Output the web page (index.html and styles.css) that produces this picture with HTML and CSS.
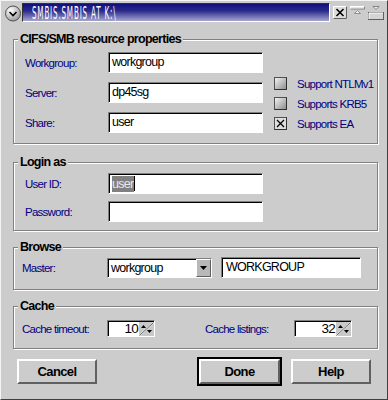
FILE: index.html
```html
<!DOCTYPE html>
<html lang="en">
<head>
    <meta charset="UTF-8">
    <meta name="viewport" content="width=device-width, initial-scale=1.0">
    <link rel="stylesheet" href="styles.css">
    <title>SMBIS.SMBIS AT K:\</title>
</head>
<body>
    <div class="window">
        <div class="titlebar">
            <svg class="sysmenu" width="18" height="18" viewBox="0 0 18 18">
                <defs>
                    <radialGradient id="knob" cx="35%" cy="30%" r="75%">
                        <stop offset="0" stop-color="#ffffff"/>
                        <stop offset="1" stop-color="#9a9a9a"/>
                    </radialGradient>
                </defs>
                <circle cx="9" cy="9.5" r="7.5" fill="url(#knob)" stroke="#505050" stroke-width="1"/>
                <path d="M5.5 8 L9 11.5 L12.5 8" fill="none" stroke="#000" stroke-width="1.6"/>
            </svg>
            <div class="caption"><span class="caption-text">SMBIS.SMBIS AT K:\</span></div>
            <svg class="tb-btn" width="14" height="13" viewBox="0 0 14 13">
                <rect x="0.5" y="0.5" width="13" height="12" fill="#dcdcdc" stroke="#fff"/>
                <path d="M13.5 0.5 V12.5 H0.5" fill="none" stroke="#606060"/>
                <path d="M3.5 3 L10.5 10 M10.5 3 L3.5 10" stroke="#000" stroke-width="1.6"/>
            </svg>
            <svg class="tb-btn" width="15" height="13" viewBox="0 0 15 13">
                <rect x="0.5" y="0.5" width="14" height="2" fill="#e8e8e8" stroke="#fff"/>
                <path d="M14.5 0.5 V3 H0.5" fill="none" stroke="#808080"/>
                <path d="M4.5 7.5 L7.5 4.5 L10.5 7.5 Z" fill="#f4f4f4" stroke="#909090"/>
            </svg>
            <svg class="tb-btn" width="16" height="14" viewBox="0 0 16 14">
                <path d="M5 0.5 H11 L8 3.5 Z" fill="#f4f4f4" stroke="#808080"/>
                <rect x="0.5" y="6.5" width="15" height="7" fill="#d4d4d4" stroke="#606060"/>
                <path d="M1 13 V7 H15" fill="none" stroke="#fff"/>
            </svg>
        </div>

        <div class="content">
            <fieldset class="group group-resource">
                <legend>CIFS/SMB resource properties</legend>
                <div class="group-body resource-body">
                    <div class="form-grid">
                        <span class="label">Workgroup:</span>
                        <div class="field">workgroup</div>
                        <span class="label">Server:</span>
                        <div class="field">dp45sg</div>
                        <span class="label">Share:</span>
                        <div class="field">user</div>
                    </div>
                    <div class="checks">
                        <div class="check"><span class="box"></span>Support NTLMv1</div>
                        <div class="check"><span class="box"></span>Supports KRB5</div>
                        <div class="check">
                            <span class="box checked">
                                <svg width="11" height="11" viewBox="0 0 11 11"><path d="M2 2 L9 9 M9 2 L2 9" stroke="#000" stroke-width="1.3"/></svg>
                            </span>Supports EA
                        </div>
                    </div>
                </div>
            </fieldset>

            <fieldset class="group group-login">
                <legend>Login as</legend>
                <div class="group-body login-body">
                    <div class="form-grid login-grid">
                        <span class="label">User ID:</span>
                        <div class="field"><span class="selected">user</span><span class="caret"></span></div>
                        <span class="label">Password:</span>
                        <div class="field"></div>
                    </div>
                </div>
            </fieldset>

            <fieldset class="group group-browse">
                <legend>Browse</legend>
                <div class="group-body browse-body">
                    <span class="label label-master">Master:</span>
                    <div class="combo">
                        <span class="combo-text">workgroup</span>
                        <span class="combo-btn">
                            <svg width="7" height="4" viewBox="0 0 7 4"><path d="M0 0 H7 L3.5 4 Z" fill="#000"/></svg>
                        </span>
                    </div>
                    <div class="field field-master">WORKGROUP</div>
                </div>
            </fieldset>

            <fieldset class="group group-cache">
                <legend>Cache</legend>
                <div class="group-body cache-body">
                    <span class="label label-timeout">Cache timeout:</span>
                    <div class="spin spin-timeout">
                        <span class="spin-value">10</span>
                        <svg class="spin-btn" width="15" height="14" viewBox="0 0 15 14">
                            <rect width="15" height="14" fill="#c8c8c8"/>
                            <path d="M0 14 L15 0" stroke="#fff" stroke-width="1.5"/>
                            <path d="M0.5 13.5 L14.5 0.5" stroke="#303030" stroke-width="0.8"/>
                            <path d="M2 6 L4.5 3 L7 6 Z" fill="#000"/>
                            <path d="M8 8 H13 L10.5 11 Z" fill="#000"/>
                        </svg>
                    </div>
                    <span class="label label-listings">Cache listings:</span>
                    <div class="spin spin-listings">
                        <span class="spin-value">32</span>
                        <svg class="spin-btn" width="15" height="14" viewBox="0 0 15 14">
                            <rect width="15" height="14" fill="#c8c8c8"/>
                            <path d="M0 14 L15 0" stroke="#fff" stroke-width="1.5"/>
                            <path d="M0.5 13.5 L14.5 0.5" stroke="#303030" stroke-width="0.8"/>
                            <path d="M2 6 L4.5 3 L7 6 Z" fill="#000"/>
                            <path d="M8 8 H13 L10.5 11 Z" fill="#000"/>
                        </svg>
                    </div>
                </div>
            </fieldset>

            <div class="buttons">
                <button class="btn btn-cancel">Cancel</button>
                <button class="btn btn-default">Done</button>
                <button class="btn">Help</button>
            </div>
        </div>
    </div>
</body>
</html>
```

FILE: styles.css
```css
body {
    margin: 0;
    padding: 0;
    background-color: #cccccc;
    font-family: "Liberation Sans", Arial, sans-serif;
    font-size: 11.5px;
    letter-spacing: -0.75px;
}

.window {
    width: 388px;
    height: 400px;
    box-sizing: border-box;
    background-color: #cccccc;
    border: 1px solid;
    border-color: #f4f4f4 #404040 #404040 #f4f4f4;
}

/* title bar */
.titlebar {
    display: flex;
    align-items: center;
    height: 19px;
    margin-top: 2px;
    padding-left: 3px;
}

.sysmenu {
    flex: none;
}

.caption {
    display: flex;
    align-items: center;
    width: 308px;
    height: 19px;
    box-sizing: border-box;
    border: 1px solid;
    border-color: #303030 #ffffff #ffffff #303030;
    background: linear-gradient(to bottom, #10107c 0%, #2a2a8c 40%, #a6a6cf 100%);
    white-space: nowrap;
}

.caption-text {
    display: inline-block;
    margin-left: 9px;
    color: #ffffff;
    font-family: "DejaVu Sans", sans-serif;
    font-size: 18px;
    line-height: 17px;
    letter-spacing: 2px;
    transform: scaleX(0.4);
    transform-origin: left center;
}

.tb-btn {
    flex: none;
    margin-left: 3px;
}

/* content */
.content {
    padding: 9px 9px 0 12px;
}

.group {
    margin: 0;
    padding: 0;
    min-width: 0;
    border: 1px solid #808080;
    box-shadow: inset 1px 1px 0 #ffffff, 1px 1px 0 #ffffff;
}

.group legend {
    margin-left: 4px;
    padding: 0 2px;
    background-color: #cccccc;
    font-size: 12.5px;
    font-weight: bold;
    line-height: 16px;
    letter-spacing: -0.7px;
    color: #000000;
}

.group-login {
    margin-top: 10px;
}

.group-browse,
.group-cache {
    margin-top: 8px;
}

.label {
    color: #000080;
    white-space: nowrap;
}

.form-grid {
    display: grid;
    grid-template-columns: 83px 155px;
    grid-auto-rows: 21px;
    row-gap: 9px;
    align-items: center;
}

.resource-body {
    display: flex;
    padding: 5px 0 10px 11px;
}

.checks {
    display: flex;
    flex-direction: column;
    gap: 7px;
    margin-left: 11px;
    padding-top: 25px;
}

.check {
    display: flex;
    align-items: center;
    height: 13px;
    color: #000080;
    white-space: nowrap;
}

.box {
    display: flex;
    flex: none;
    align-items: center;
    justify-content: center;
    width: 13px;
    height: 13px;
    box-sizing: border-box;
    margin-right: 10px;
    border: 1px solid;
    border-color: #505050 #303030 #303030 #505050;
    background: linear-gradient(to bottom right, #f2f2f2, #8e8e8e);
}

.box.checked {
    background: #dedede;
}

.login-body {
    padding: 3px 0 8px 11px;
}

.login-grid {
    row-gap: 7px;
}

/* entry fields */
.field {
    height: 21px;
    box-sizing: border-box;
    padding-left: 3px;
    border: 1px solid;
    border-color: #808080 #ffffff #ffffff #808080;
    box-shadow: inset 1px 1px 0 #000000;
    background-color: #ffffff;
    color: #000000;
    font-size: 12.5px;
    line-height: 19px;
    white-space: nowrap;
    display: flex;
    align-items: center;
}

.selected {
    background-color: #808080;
    color: #e8e8e8;
    line-height: 16px;
    padding: 0 1px 0 0;
}

.caret {
    width: 1px;
    height: 15px;
    background-color: #000000;
}

.browse-body {
    display: flex;
    align-items: center;
    padding: 2px 0 11px 8px;
}

.label-master {
    width: 85px;
}

.combo {
    display: flex;
    width: 105px;
    height: 20px;
    box-sizing: border-box;
    border: 1px solid;
    border-color: #808080 #ffffff #ffffff #808080;
    box-shadow: inset 1px 1px 0 #000000;
    background-color: #ffffff;
    font-size: 12.5px;
}

.combo-text {
    flex: 1;
    padding: 1px 0 0 3px;
    line-height: 17px;
}

.combo-btn {
    display: flex;
    align-items: center;
    justify-content: center;
    width: 15px;
    box-sizing: border-box;
    border: 1px solid;
    border-color: #ffffff #606060 #606060 #ffffff;
    background-color: #b8b8b8;
}

.field-master {
    width: 140px;
    margin-left: 9px;
    padding-left: 4px;
}

.cache-body {
    display: flex;
    align-items: center;
    padding: 6px 0 11px 8px;
}

.label-timeout {
    width: 85px;
}

.label-listings {
    width: 89px;
    margin-left: 50px;
}

.spin {
    display: flex;
    height: 17px;
    box-sizing: border-box;
    border: 1px solid;
    border-color: #808080 #ffffff #ffffff #808080;
    box-shadow: inset 1px 1px 0 #000000;
    background-color: #ffffff;
}

.spin-timeout {
    width: 48px;
}

.spin-listings {
    width: 58px;
}

.spin-value {
    flex: 1;
    text-align: right;
    padding-right: 1px;
    padding-top: 1px;
    line-height: 14px;
    font-size: 13.5px;
    letter-spacing: -0.8px;
}

.spin-btn {
    flex: none;
    margin-top: 1px;
}

/* push buttons */
.buttons {
    display: flex;
    gap: 11px;
    margin-top: 10px;
    padding: 0 7px 0 4px;
}

.btn {
    width: 80px;
    height: 25px;
    box-sizing: border-box;
    padding: 0;
    border: 2px solid;
    border-color: #ffffff #606060 #606060 #ffffff;
    background-color: #cccccc;
    font-family: "Liberation Sans", Arial, sans-serif;
    font-size: 13px;
    font-weight: bold;
    letter-spacing: -0.6px;
    color: #000000;
}

.btn-cancel {
    margin-right: auto;
}

.btn-default {
    width: 81px;
    outline: 2px solid #000000;
    outline-offset: 0;
}
```
